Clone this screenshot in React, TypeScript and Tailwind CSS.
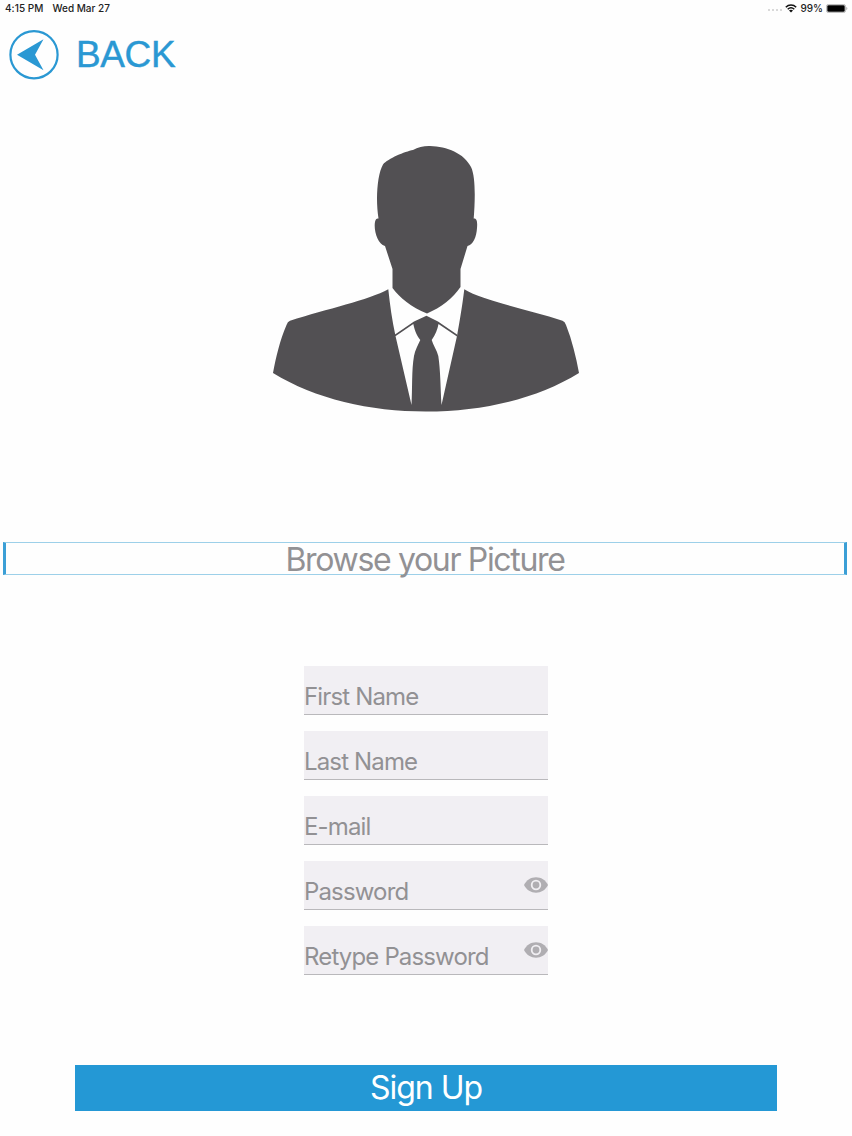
import React, { useState } from 'react';

interface FieldProps {
  label: string;
  type?: string;
}

const Field: React.FC<FieldProps> = ({ label, type = 'text' }) => {
  const [value, setValue] = useState('');
  const [visible, setVisible] = useState(false);
  const isPassword = type === 'password';

  return (
    <label className="relative flex h-[49px] w-[244px] items-end justify-between border-b border-[#b9b8bb] bg-[#f1eff3]">
      <span className="text-[24px] leading-[34px] tracking-[-0.85px] whitespace-nowrap text-[#929194]">
        {value ? '' : label}
      </span>
      <input
        type={isPassword && visible ? 'text' : type}
        value={value}
        onChange={(e) => setValue(e.target.value)}
        aria-label={label}
        className="absolute inset-0 bg-transparent pt-3 text-[24px] text-[#525053] outline-none"
      />
      {isPassword && (
        <button
          type="button"
          aria-label="Show password"
          onClick={() => setVisible(!visible)}
          className="relative mb-4 shrink-0"
        >
          <EyeIcon />
        </button>
      )}
    </label>
  );
};

const EyeIcon = () => (
  <svg className="h-4 w-6" viewBox="0 0 24 16">
    <path d="M0 8C2.5 3 7 .3 12 .3S21.500 3 24 8C21.500 13 17 15.700 12 15.700S2.500 13 0 8Z" fill="#b0aeb2" />
    <circle cx="12" cy="8" r="4.300" fill="#b0aeb2" stroke="#f1eff3" strokeWidth="1.800" />
  </svg>
);

const BackIcon = () => (
  <svg className="h-[50px] w-[50px]" viewBox="0 0 50 50">
    <circle cx="25" cy="24.700" r="23.600" fill="none" stroke="#2a98d3" strokeWidth="2.200" />
    <path d="M8 24.700 34.500 9.200 26 24.700 34.500 40.200Z" fill="#2a98d3" />
  </svg>
);

const WifiIcon = () => (
  <svg className="h-[9px] w-3" viewBox="0 0 12 9">
    <path d="M.8 3.200C3.700.4 8.300.4 11.200 3.200M2.700 5.200C4.600 3.500 7.400 3.500 9.300 5.200" fill="none" stroke="#111" strokeWidth="1.500" />
    <path d="M4 6.500C5.200 5.600 6.800 5.600 8 6.500L6 8.600Z" fill="#111" />
  </svg>
);

const BatteryIcon = () => (
  <svg className="h-[9px] w-[22px]" viewBox="0 0 22 9">
    <rect x=".4" y=".4" width="19.200" height="8.200" rx="2.200" fill="none" stroke="#999" strokeWidth=".7" />
    <rect x="1.300" y="1.300" width="17.400" height="6.400" rx="1.300" fill="#000" />
    <path d="M20.500 3V6C21.500 5.500 21.500 3.500 20.500 3Z" fill="#888" />
  </svg>
);

// Default avatar: head, jacket halves, collar and tie
const Avatar = () => (
  <svg className="h-[268px] w-[308px]" viewBox="272 145 308 268" fill="#525053">
    <path d="M392.500 288V269L385 246C377.500 244 373.500 230 375 222C375.500 219 377 218 378.500 218.500C375.500 200 377 175 383 164.500C388 158.500 405 151.500 413 150C418 147 424 145.700 430 145.900C447 146.500 464 153 471 167C476 177 475 202 473.700 218.500C477 218 477.500 222 477 228C476.500 237 473 245 467.500 246L460.500 269V287C453 298 441 307.500 427 313.500C411 307 400 298 392.500 288Z" />
    <path d="M388.300 289.300C369 300 327 309 290 320.700Q287.500 321.500 286.500 325C280 340 276 357 273 373C315 399 370 411.500 426 411.500S537 399 579 373C576 357 572 340 566 325Q565 321.500 562.500 320.700C527 309 483 301 464.300 289.300C462 308 459.500 322 457 336L441.500 405C440.500 388 440.500 370 438.300 356C437 350 433 345 431.700 340C435.500 335 437.500 329 438.500 324L457 336.500V334.500L438 321.500L426.500 315.700L414 321.500L395 334.500V336.500L413.300 324C414.500 329 416 335 420.300 340C418 345 415 350 414 356C411.500 370 412.500 388 411.500 405L395.500 336C392 320 390 305 388.300 289.300Z" />
  </svg>
);

export default function App() {
  return (
    <div className="flex h-[1136px] w-[852px] flex-col overflow-hidden bg-[#fefefe] font-['Inter',sans-serif]">
      {/* Status bar */}
      <div className="flex h-4 items-center justify-between pr-1 pl-[5px] text-[10px] leading-4 font-medium text-[#222]">
        <div className="flex gap-[9px]">
          <span className="tracking-[0.05px]">4:15 PM</span>
          <span>Wed Mar 27</span>
        </div>
        <div className="flex items-center gap-[3px]">
          <div className="flex gap-[2px] pt-1">
            <i className="h-[2px] w-[2px] rounded-full bg-[#ccc]" />
            <i className="h-[2px] w-[2px] rounded-full bg-[#ccc]" />
            <i className="h-[2px] w-[2px] rounded-full bg-[#ccc]" />
            <i className="h-[2px] w-[2px] rounded-full bg-[#ccc]" />
          </div>
          <WifiIcon />
          <span>99%</span>
          <BatteryIcon />
        </div>
      </div>

      {/* Back */}
      <button type="button" className="mt-[14px] ml-[9px] flex items-center gap-[17px] self-start text-[#2a98d3]">
        <BackIcon />
        <span className="font-['Liberation_Sans',sans-serif] text-[37px] leading-[50px] tracking-[-0.4px] [-webkit-text-stroke:0.4px_#2a98d3]">
          BACK
        </span>
      </button>

      <div className="mt-[65px] flex justify-center">
        <Avatar />
      </div>

      <button
        type="button"
        className="mt-[129px] mr-[5px] ml-[3px] flex h-[33px] items-center justify-center border-x-[3px] border-y border-x-[#3b9fd6] border-y-[#9dd0e9] text-[32px] leading-[31px] text-[#929194]"
      >
        <span className="pt-px tracking-[-1.33px]">Browse your Picture</span>
      </button>

      <form className="flex flex-1 flex-col items-center" onSubmit={(e) => e.preventDefault()}>
        <div className="mt-[90.8px] flex flex-col gap-[16.15px]">
          <Field label="First Name" />
          <Field label="Last Name" />
          <Field label="E-mail" type="email" />
          <Field label="Password" type="password" />
          <Field label="Retype Password" type="password" />
        </div>

        <button
          type="submit"
          className="mt-[89.6px] flex h-[46px] w-[702px] items-center justify-center bg-[#2498d5] text-[32px] leading-[46px] text-white"
        >
          <span className="pt-px tracking-[-1px]">Sign Up</span>
        </button>
      </form>
    </div>
  );
}
